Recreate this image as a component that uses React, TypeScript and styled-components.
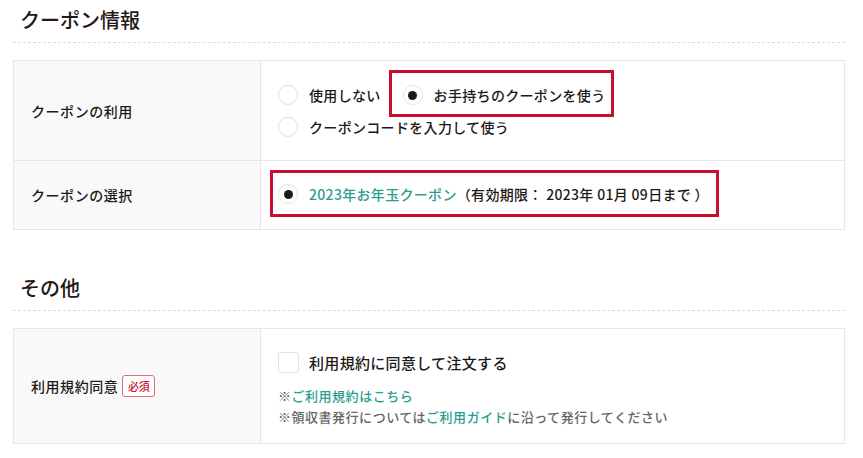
import styled, { createGlobalStyle } from 'styled-components';

const GlobalStyle = createGlobalStyle`
  body {
    margin: 0;
    background: #fff;
    font-family: "Noto Sans CJK JP", "Noto Sans", sans-serif;
    color: #231815;
  }
`;

const Page = styled.div`
  width: 832px;
  margin-left: 13px;
`;

const Heading = styled.h2<{ first?: boolean }>`
  margin: ${(p) => (p.first ? '0' : '38px')} 0 17px;
  padding: 6px 7px 8px;
  font-size: 20px;
  line-height: 28px;
  font-weight: 500;
  border-bottom: 1px dashed #dcdcdc;
`;

const Table = styled.div`
  display: grid;
  grid-template-columns: 246px 1fr;
  border: 1px solid #e6e6e6;
  letter-spacing: 0.02em;
`;

const Label = styled.div<{ last?: boolean }>`
  display: flex;
  align-items: center;
  gap: 4px;
  padding-left: 17px;
  background: #f9f9f9;
  font-size: 14px;
  font-weight: 500;
  letter-spacing: 0.04em;
  border-bottom: ${(p) => (p.last ? 'none' : '1px solid #e6e6e6')};
`;

const Cell = styled.div<{ last?: boolean; pad: string }>`
  display: flex;
  flex-direction: column;
  gap: 2px;
  padding: ${(p) => p.pad};
  border-left: 1px solid #e6e6e6;
  border-bottom: ${(p) => (p.last ? 'none' : '1px solid #e6e6e6')};
  font-size: 14px;
`;

const Line = styled.div`
  display: flex;
  align-items: center;
  height: 30px;
`;

const Option = styled.label<{ spaced?: boolean }>`
  position: relative;
  display: inline-flex;
  align-items: center;
  gap: 11px;
  height: 20px;
  margin-right: ${(p) => (p.spaced ? '22px' : '0')};
  font-weight: 500;
  white-space: nowrap;
`;

const Highlight = styled.span<{ box: string }>`
  position: absolute;
  inset: ${(p) => p.box};
  border: 3px solid #c8102e;
  pointer-events: none;
`;

const Radio = styled.span<{ checked?: boolean }>`
  width: 20px;
  height: 20px;
  box-sizing: border-box;
  border-radius: 50%;
  border: 1px solid #e2e2e2;
  background: #fff;
  display: flex;
  align-items: center;
  justify-content: center;
  flex-shrink: 0;

  &::after {
    content: '';
    display: ${(p) => (p.checked ? 'block' : 'none')};
    width: 9px;
    height: 9px;
    border-radius: 50%;
    background: #231815;
  }
`;

const Check = styled.span`
  width: 21px;
  height: 21px;
  box-sizing: border-box;
  border: 1px solid #e2e2e2;
  border-radius: 3px;
  background: #fff;
  flex-shrink: 0;
`;

const Green = styled.span`
  color: #2a9d8f;
`;

const Agree = styled.label`
  display: flex;
  align-items: center;
  gap: 10px;
  height: 22px;
  font-size: 15px;
  font-weight: 500;
`;

const Notes = styled.div`
  margin-top: 10px;
  font-size: 13px;
  line-height: 21px;
  color: #666;
  font-weight: 500;
  letter-spacing: 0.04em;
`;

const Badge = styled.span`
  display: inline-flex;
  align-items: center;
  justify-content: center;
  width: 33px;
  height: 22px;
  box-sizing: border-box;
  border: 1px solid #e26a7e;
  border-radius: 3px;
  color: #c8102e;
  font-size: 11px;
  font-weight: 500;
  letter-spacing: 0;
  background: #fff;
`;

export default function App() {
  return (
    <Page>
      <GlobalStyle />
      <Heading first>クーポン情報</Heading>
      <Table>
        <Label>クーポンの利用</Label>
        <Cell pad="19px 17px 18px">
          <Line>
            <Option spaced>
              <Radio />
              使用しない
            </Option>
            <Option>
              <Highlight box="-15px -9px -12px -14px" />
              <Radio checked />
              お手持ちのクーポンを使う
            </Option>
          </Line>
          <Line>
            <Option>
              <Radio />
              クーポンコードを入力して使う
            </Option>
          </Line>
        </Cell>
        <Label last>クーポンの選択</Label>
        <Cell last pad="18px 17px 20px">
          <Line>
            <Option>
              <Highlight box="-14px -10px -13px -8px" />
              <Radio checked />
              <span>
                <Green>2023年お年玉クーポン</Green>（有効期限： 2023年 01月 09日まで ）
              </span>
            </Option>
          </Line>
        </Cell>
      </Table>

      <Heading>その他</Heading>
      <Table>
        <Label last>
          利用規約同意
          <Badge>必須</Badge>
        </Label>
        <Cell last pad="22px 17px 16px">
          <Agree>
            <Check />
            利用規約に同意して注文する
          </Agree>
          <Notes>
            <div>
              ※<Green>ご利用規約はこちら</Green>
            </div>
            <div>
              ※領収書発行については<Green>ご利用ガイド</Green>に沿って発行してください
            </div>
          </Notes>
        </Cell>
      </Table>
    </Page>
  );
}
